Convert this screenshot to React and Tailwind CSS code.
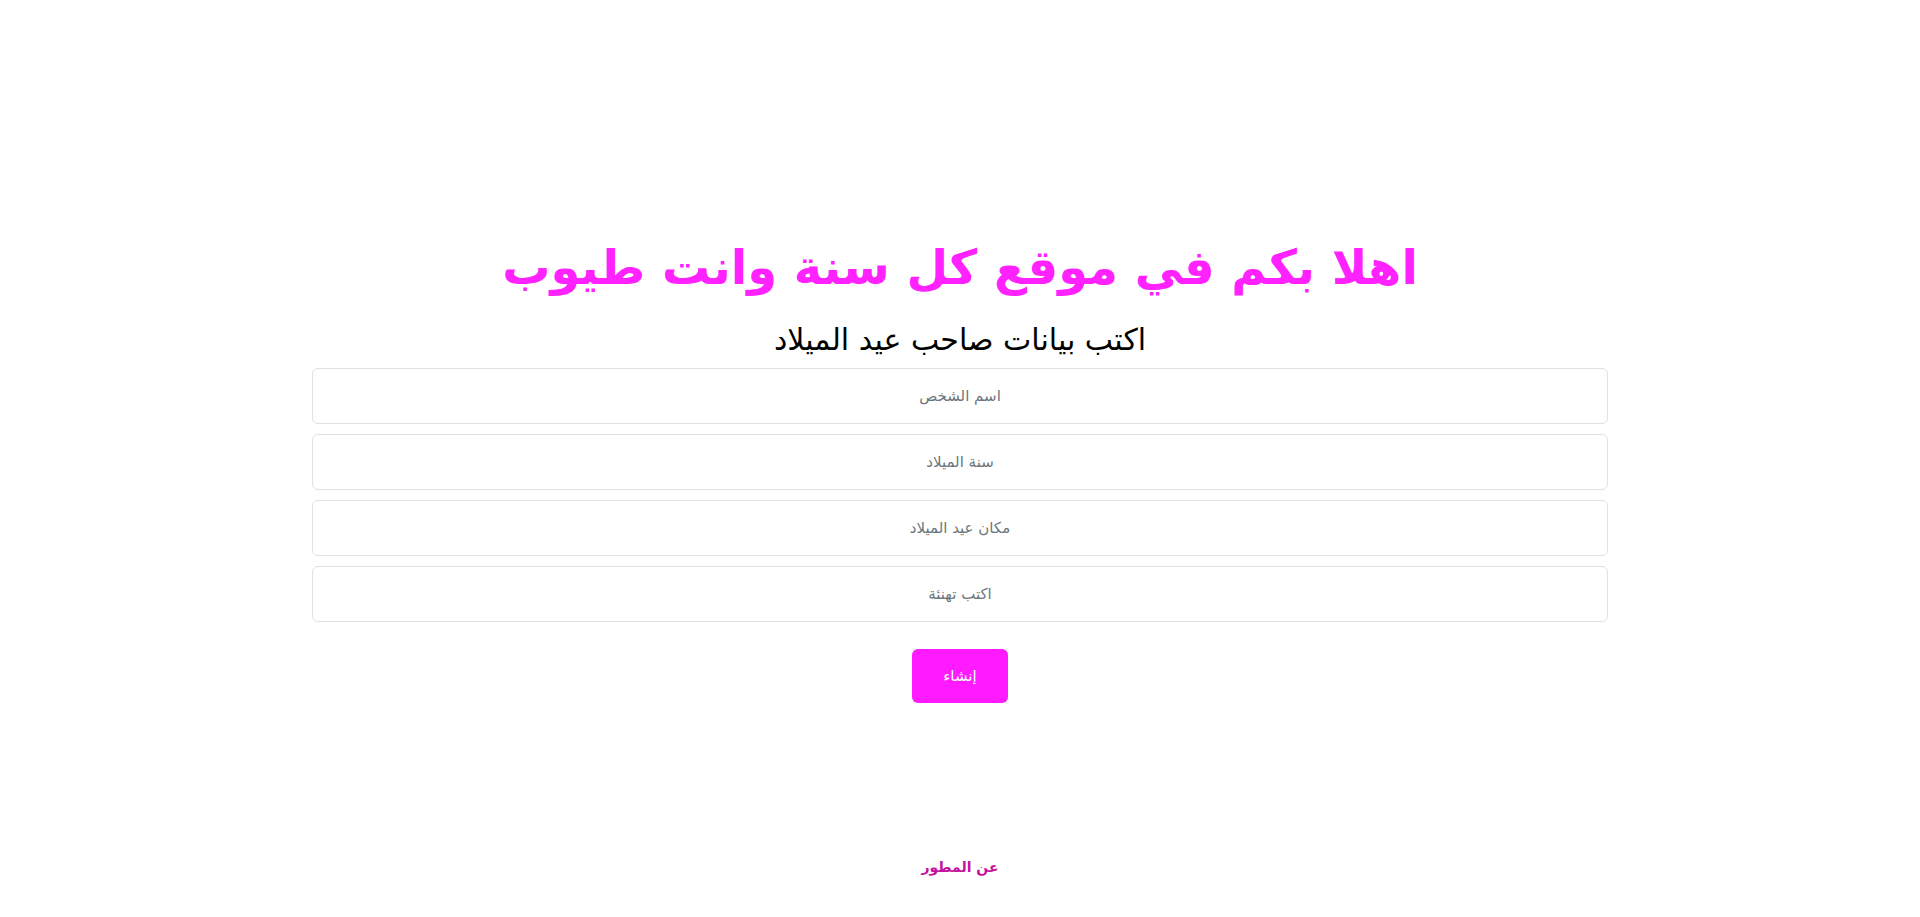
export default function App() {
  const fields = ["اسم الشخص", "سنة الميلاد", "مكان عيد الميلاد", "اكتب تهنئة"];
  return (
    <div dir="rtl" className="min-h-[917px] bg-white flex flex-col" style={{ fontFamily: '"DejaVu Sans", "Noto Sans", sans-serif' }}>
      <main className="flex flex-col items-center pt-[238px]">
        <h1 className="text-[48px] leading-[58px] font-bold text-[#ff22ff] m-0">اهلا بكم في موقع كل سنة وانت طيوب</h1>
        <h2 className="mt-[25px] text-[30px] leading-[38px] font-normal text-black">اكتب بيانات صاحب عيد الميلاد</h2>
        <form className="w-[1296px] mt-[9px] flex flex-col gap-[10px]" onSubmit={(e) => e.preventDefault()}>
          {fields.map((f) => (
            <input
              key={f}
              type="text"
              placeholder={f}
              className="h-[56px] w-full rounded-[6px] border border-[#dee2e6] bg-white px-3 text-center text-[15px] text-[#212529] placeholder:text-[#6c757d] outline-none"
            />
          ))}
          <div className="flex justify-center mt-[17px]">
            <button type="submit" className="w-[96px] h-[54px] rounded-[6px] bg-[#ff1aff] text-white text-[15px]">إنشاء</button>
          </div>
        </form>
      </main>
      <footer className="mt-auto flex justify-center pb-[39px]">
        <a href="#" className="text-[14px] font-bold text-[#c4119f] no-underline">عن المطور</a>
      </footer>
    </div>
  );
}
